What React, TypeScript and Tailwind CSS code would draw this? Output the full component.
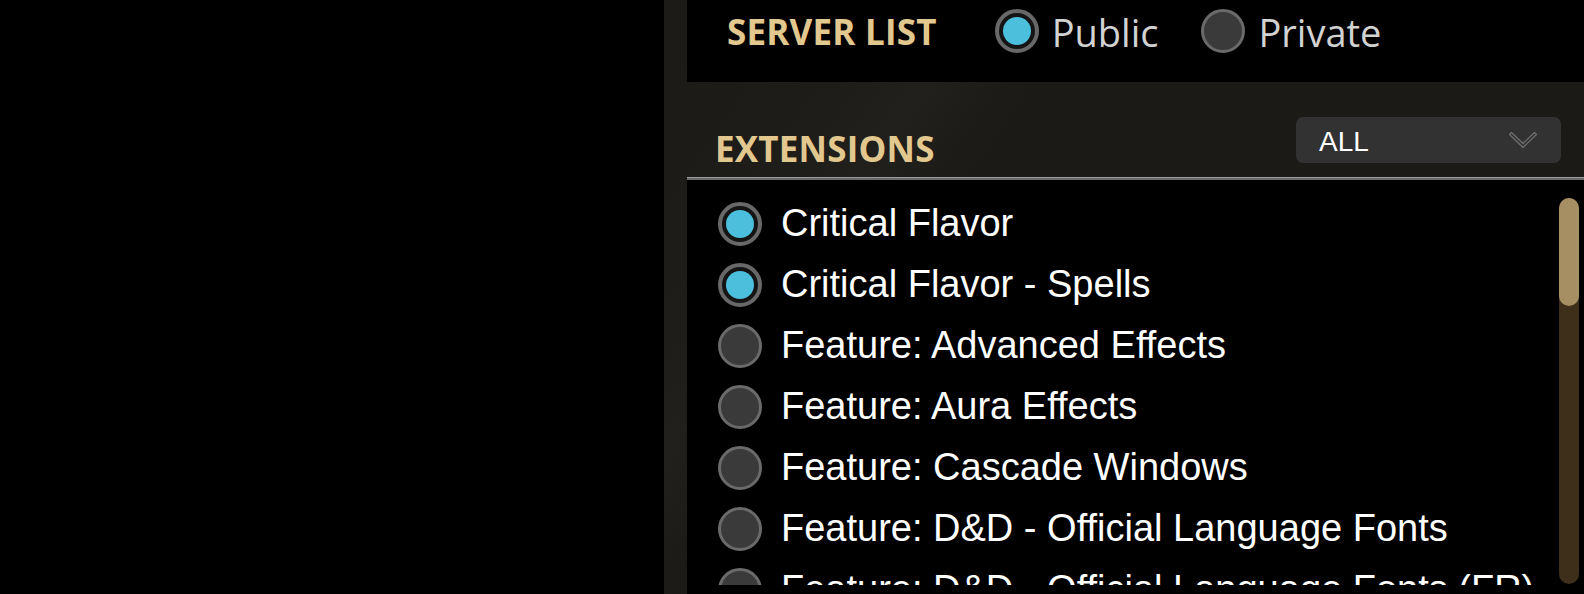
import { useState } from 'react';

const extensions = [
  { name: 'Critical Flavor', on: true },
  { name: 'Critical Flavor - Spells', on: true },
  { name: 'Feature: Advanced Effects', on: false },
  { name: 'Feature: Aura Effects', on: false },
  { name: 'Feature: Cascade Windows', on: false },
  { name: 'Feature: D&D - Official Language Fonts', on: false },
  { name: 'Feature: D&D - Official Language Fonts (FR)', on: false },
  { name: 'Feature: D&D - Official Language Fonts (DE)', on: false },
];

const Radio = ({ on }: { on: boolean }) =>
  on ? (
    <span className="flex h-[44px] w-[44px] shrink-0 items-center justify-center rounded-full border-[4px] border-[#686868] bg-[#141414]">
      <span className="h-[28px] w-[28px] rounded-full bg-[#4cbfdc]" />
    </span>
  ) : (
    <span className="block h-[44px] w-[44px] shrink-0 rounded-full border-[3px] border-[#6a6a6a] bg-[#3a3a3a]" />
  );

const App = () => {
  const [serverType, setServerType] = useState<'public' | 'private'>('public');

  return (
    <div className="flex h-[594px] w-[1584px] overflow-hidden bg-black">
      <div className="w-[664px] shrink-0" />

      {/* Settings panel */}
      <div className="flex flex-1 flex-col bg-[linear-gradient(125deg,#1b1a17_0%,#1e1d1a_18%,#21201c_24%,#1b1a17_32%,#1b1a17_100%)] pl-[23px]">
        {/* Server list */}
        <div className="flex h-[82px] shrink-0 items-center bg-black pl-[40px] pb-[18px]">
          <span className="font-['Open_Sans',sans-serif] text-[35px] font-bold tracking-[0.2px] text-[#e2c88e]">
            SERVER LIST
          </span>
          <button
            className="ml-[58px] flex items-center gap-[13px]"
            onClick={() => setServerType('public')}
          >
            <span className="-mt-[2px] flex">
              <Radio on={serverType === 'public'} />
            </span>
            <span className="font-['Open_Sans',sans-serif] text-[38px] text-[#d2d2d2]">Public</span>
          </button>
          <button
            className="ml-[43px] flex items-center gap-[13px]"
            onClick={() => setServerType('private')}
          >
            <span className="-mt-[2px] flex">
              <Radio on={serverType === 'private'} />
            </span>
            <span className="font-['Open_Sans',sans-serif] text-[38px] text-[#d2d2d2]">Private</span>
          </button>
        </div>

        {/* Extensions header */}
        <div className="flex h-[95px] shrink-0 items-end justify-between pr-[23px] pb-[14px]">
          <span className="mb-[-12px] ml-[28px] font-['Open_Sans',sans-serif] text-[35px] font-bold tracking-[0.2px] text-[#e2c88e]">
            EXTENSIONS
          </span>
          <div className="flex h-[46px] w-[265px] items-center justify-between rounded-[7px] bg-[#323232] pl-[23px] pr-[24px]">
            <span className="mt-[3px] font-['Liberation_Sans',Arial,sans-serif] text-[28px] text-white">ALL</span>
            <svg width="28" height="17" viewBox="0 0 28 17" fill="none">
              <polygon
                points="0.5,2.5 2.5,0.5 14,11.5 25.5,0.5 27.5,2.5 14,15.5"
                stroke="#707070"
                strokeWidth="1.2"
                strokeLinejoin="round"
              />
            </svg>
          </div>
        </div>
        <div className="h-[3px] shrink-0 border-t border-[#9a9a9a] bg-[#6a6a6a]" />

        {/* Extension list */}
        <div className="relative flex-1 bg-black">
          <div className="h-[405px] overflow-hidden pt-[13px] pl-[31px]">
            {extensions.map((ext) => (
              <div key={ext.name} className="flex h-[61px] items-center gap-[19px]">
                <Radio on={ext.on} />
                <span className="font-['Liberation_Sans',Arial,sans-serif] text-[38px] whitespace-nowrap text-white">
                  {ext.name}
                </span>
              </div>
            ))}
          </div>
          <div className="absolute top-[18px] right-[5px] h-[386px] w-[20px] rounded-full bg-[#3e2f1b]">
            <div className="h-[108px] w-full rounded-full bg-[#a68f62]" />
          </div>
        </div>
      </div>
    </div>
  );
};

export default App;
